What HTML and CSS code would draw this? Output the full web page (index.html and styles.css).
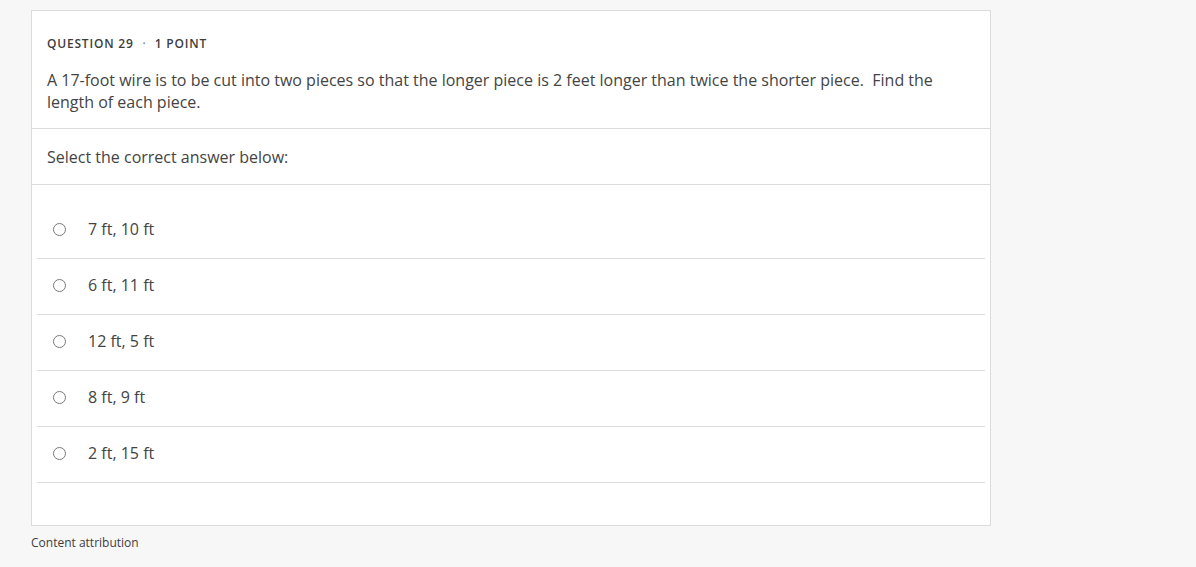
FILE: index.html
```html
<!DOCTYPE html>
<html lang="en">
<head>
<meta charset="utf-8">
<title>Question 29</title>
<link rel="stylesheet" href="styles.css">
</head>
<body>
<main class="page">
  <section class="card">
    <div class="question">
      <div class="q-meta"><span>QUESTION 29</span><span class="dot">·</span><span>1 POINT</span></div>
      <p class="q-text">A 17-foot wire is to be cut into two pieces so that the longer piece is 2 feet longer than twice the shorter piece.&nbsp; Find the length of each piece.</p>
    </div>
    <div class="prompt">Select the correct answer below:</div>
    <ul class="options">
      <li class="option"><span class="radio"></span><span class="label">7 ft, 10 ft</span></li>
      <li class="option"><span class="radio"></span><span class="label">6 ft, 11 ft</span></li>
      <li class="option"><span class="radio"></span><span class="label">12 ft, 5 ft</span></li>
      <li class="option"><span class="radio"></span><span class="label">8 ft, 9 ft</span></li>
      <li class="option"><span class="radio"></span><span class="label">2 ft, 15 ft</span></li>
    </ul>
  </section>
  <div class="attribution">Content attribution</div>
</main>
</body>
</html>
```

FILE: styles.css
```css
html, body {
  margin: 0;
  padding: 0;
  background: #f7f7f7;
  font-family: "Open Sans", "Liberation Sans", sans-serif;
  color: #3d3d3d;
}
.page {
  padding: 10px 0 0 31px;
  width: 960px;
}
.card {
  background: #fff;
  border: 1px solid #dcdcdc;
  box-sizing: border-box;
  width: 960px;
}
.question {
  padding: 25px 15px 15px 15px;
  border-bottom: 1px solid #dcdcdc;
}
.q-meta {
  font-size: 12px;
  line-height: 16px;
  font-weight: 600;
  letter-spacing: 0.8px;
  color: #3d3d3d;
  display: flex;
  gap: 9px;
}
.q-meta .dot {
  font-weight: 400;
  color: #666;
  letter-spacing: 0;
}
.q-text {
  margin: 17px 0 0 0;
  font-size: 16px;
  line-height: 22px;
  color: #444;
  padding-right: 40px;
}
.prompt {
  padding: 17px 15px 16px 15px;
  font-size: 16px;
  line-height: 22px;
  color: #444;
  border-bottom: 1px solid #dcdcdc;
}
.options {
  list-style: none;
  margin: 0;
  padding: 18px 5px 42px 5px;
}
.option {
  height: 52px;
  padding: 0 0 3px 16px;
  border-bottom: 1px solid #dcdcdc;
  display: flex;
  align-items: center;
}
.radio {
  width: 11px;
  height: 11px;
  border: 1px solid #7a7a7a;
  border-radius: 50%;
  flex: none;
}
.label {
  margin-left: 22px;
  font-size: 16px;
  line-height: 22px;
  color: #444;
}
.attribution {
  margin-top: 9px;
  font-size: 12px;
  line-height: 16px;
  color: #3d3d3d;
}
```
